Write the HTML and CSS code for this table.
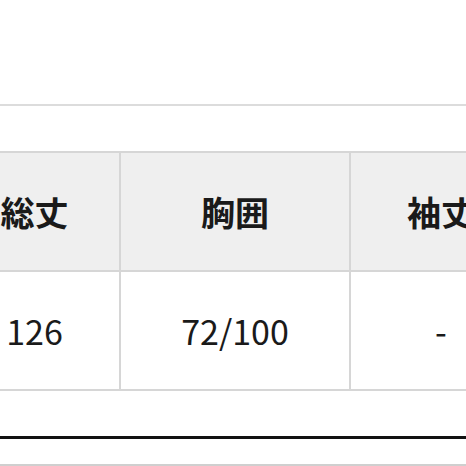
FILE: index.html
```html
<!DOCTYPE html>
<html lang="ja">
<head>
<meta charset="utf-8">
<link rel="stylesheet" href="styles.css">
</head>
<body>
<div class="page">
  <div class="rule-top"></div>
  <div class="size-table">
    <div class="row head">
      <div class="cell c1">総丈</div>
      <div class="cell c2">胸囲</div>
      <div class="cell c3">袖丈</div>
      <div class="cell c4"></div>
    </div>
    <div class="row body">
      <div class="cell c1">126</div>
      <div class="cell c2">72/100</div>
      <div class="cell c3">-</div>
      <div class="cell c4"></div>
    </div>
  </div>
  <div class="rule-black"></div>
  <div class="rule-bottom"></div>
</div>
</body>
</html>
```

FILE: styles.css
```css
html, body {
  margin: 0;
  padding: 0;
  background: #ffffff;
}
.page {
  width: 466px;
  height: 466px;
  overflow: hidden;
  font-family: "Noto Sans CJK JP", "Noto Sans", sans-serif;
  color: #1a1a1a;
}
.rule-top {
  margin-top: 104px;
  height: 2px;
  background: #dcdcdc;
}
.size-table {
  margin-top: 45px;
  margin-left: -50px;
  width: 800px;
  border-top: 2px solid #d6d6d6;
}
.row {
  display: flex;
}
.cell {
  box-sizing: border-box;
  flex: none;
  height: 119px;
  border-right: 2px solid #d6d6d6;
  border-bottom: 2px solid #d6d6d6;
  display: flex;
  align-items: center;
  justify-content: center;
  font-size: 34px;
  line-height: 1;
}
.head .cell {
  background: #efefef;
  font-weight: 700;
}
.body .cell {
  background: #ffffff;
  font-weight: 400;
}
.c1 { width: 171px; }
.c2 { width: 230px; }
.c3 { width: 182px; }
.c4 { width: 200px; }
.rule-black {
  margin-top: 45px;
  height: 3px;
  background: #111111;
}
.rule-bottom {
  margin-top: 25px;
  height: 2px;
  background: #cfcfcf;
}
```
